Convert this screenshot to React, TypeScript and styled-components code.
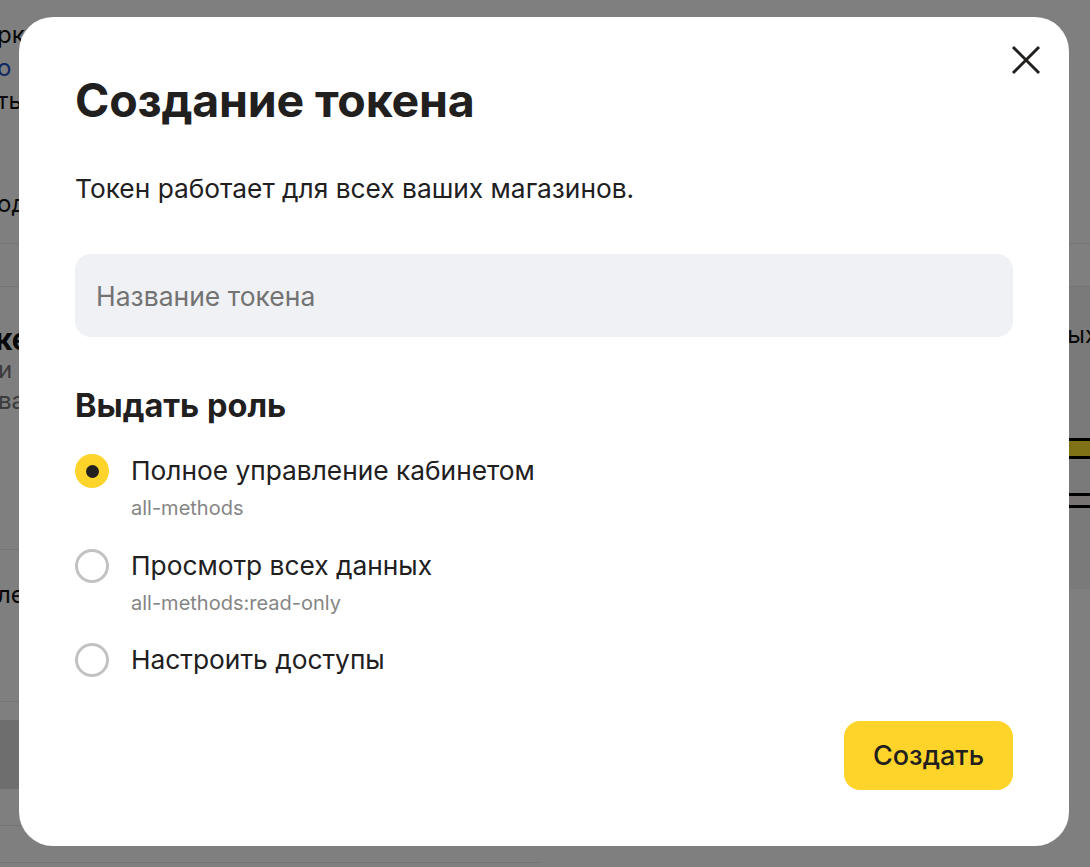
import React, { useState } from "react";
import styled, { createGlobalStyle } from "styled-components";

const GlobalStyle = createGlobalStyle`
  html, body {
    margin: 0;
    padding: 0;
    overflow: hidden;
  }
  body {
    font-family: Inter, "Noto Sans", "Liberation Sans", sans-serif;
    color: #21201f;
  }
  * {
    box-sizing: border-box;
  }
`;

const roles = [
  { id: "all", title: "Полное управление кабинетом", code: "all-methods" },
  { id: "read", title: "Просмотр всех данных", code: "all-methods:read-only" },
  { id: "custom", title: "Настроить доступы", code: "" },
];

const App = () => {
  const [role, setRole] = useState("all");

  return (
    <>
      <GlobalStyle />
      <Page>
        <Header>
          <PageLine>ркетплейс</PageLine>
          <PageLine $link>о</PageLine>
          <PageLine>ть</PageLine>
          <PageLine $gap>од</PageLine>
        </Header>
        <Tabs />
        <Content>
          <LeftCol>
            <PageHeading>кен</PageHeading>
            <PageMuted>и</PageMuted>
            <PageMuted>ва</PageMuted>
            <Divider $top={133} />
            <PageLine $top={28}>ле</PageLine>
            <Divider $top={90} />
            <GrayBand />
            <Divider $top={36} />
            <Divider $top={36} />
          </LeftCol>
          <RightCol>
            <InfoPanel>
              <PanelText>ых</PanelText>
              <YellowBar />
              <StripeBar />
            </InfoPanel>
          </RightCol>
        </Content>

        <Overlay>
          <Modal>
            <CloseButton aria-label="Закрыть">
              <svg width="30" height="30" viewBox="0 0 30 30">
                <path
                  d="M2 2L28 28M28 2L2 28"
                  stroke="#21201f"
                  strokeWidth="3"
                  fill="none"
                />
              </svg>
            </CloseButton>

            <Title>Создание токена</Title>
            <Lead>Токен работает для всех ваших магазинов.</Lead>
            <NameInput placeholder="Название токена" />

            <SectionTitle>Выдать роль</SectionTitle>
            <RoleList>
              {roles.map((r) => (
                <RoleOption key={r.id} onClick={() => setRole(r.id)}>
                  <Radio $checked={role === r.id} />
                  <RoleText>
                    <RoleTitle>{r.title}</RoleTitle>
                    {r.code && <RoleCode>{r.code}</RoleCode>}
                  </RoleText>
                </RoleOption>
              ))}
            </RoleList>

            <Footer>
              <PrimaryButton>Создать</PrimaryButton>
            </Footer>
          </Modal>
        </Overlay>
      </Page>
    </>
  );
};

export default App;

const Page = styled.div`
  position: relative;
  width: 100%;
  height: 867px;
  background: #ffffff;
  overflow: hidden;
  color: #111111;
`;

const Header = styled.div`
  padding: 18px 0 23px;
  border-bottom: 1px solid #e8e8e8;
`;

const PageLine = styled.div<{ $link?: boolean; $gap?: boolean; $top?: number }>`
  font-size: 24px;
  line-height: 33px;
  margin-left: -3px;
  margin-top: ${(p) => (p.$gap ? 70 : p.$top ?? 0)}px;
  color: ${(p) => (p.$link ? "#1f4fc4" : "#111111")};
`;

const Tabs = styled.div`
  height: 43px;
  border-bottom: 1px solid #e8e8e8;
`;

const Content = styled.div`
  display: flex;
`;

const LeftCol = styled.div`
  width: 540px;
  padding-top: 37px;
`;

const PageHeading = styled.div`
  font-size: 30px;
  font-weight: 700;
  line-height: 30px;
  margin-left: -5px;
`;

const PageMuted = styled.div`
  font-size: 24px;
  line-height: 31px;
  margin-left: -2px;
  color: #777777;
`;

const Divider = styled.div<{ $top: number }>`
  margin-top: ${(p) => p.$top}px;
  height: 1px;
  background: #e8e8e8;
`;

const GrayBand = styled.div`
  margin-top: 18px;
  height: 69px;
  background: #dcdcdc;
`;

const RightCol = styled.div`
  flex: 1;
`;

const InfoPanel = styled.div`
  height: 302px;
  background: #f4f4f4;
  padding-top: 33px;
  overflow: hidden;
`;

const PanelText = styled.div`
  font-size: 24px;
  line-height: 30px;
  text-align: right;
  margin-right: -8px;
`;

const YellowBar = styled.div`
  margin-top: 88px;
  height: 21px;
  background: #ffe52c;
  border-top: 3px solid #000;
  border-bottom: 3px solid #000;
`;

const StripeBar = styled.div`
  margin-top: 34px;
  height: 15px;
  background: #f0e6e6;
  border-top: 3px solid #000;
  border-bottom: 3px solid #000;
`;

const Overlay = styled.div`
  position: absolute;
  inset: 0;
  background: rgba(0, 0, 0, 0.5);
  padding: 17px 21px 0 19px;
  display: flex;
  align-items: flex-start;
`;

const Modal = styled.div`
  position: relative;
  width: 1050px;
  background: #ffffff;
  border-radius: 34px;
  padding: 57px 56px 56px;
  display: flex;
  flex-direction: column;
  color: #21201f;
`;

const CloseButton = styled.button`
  position: absolute;
  top: 28px;
  right: 28px;
  width: 30px;
  height: 30px;
  padding: 0;
  border: none;
  background: none;
  cursor: pointer;
  display: flex;
`;

const Title = styled.h1`
  margin: 0;
  font-size: 46.5px;
  line-height: 52px;
  font-weight: 700;
  letter-spacing: -0.2px;
`;

const Lead = styled.p`
  margin: 47px 0 0;
  font-size: 26.3px;
  line-height: 32px;
`;

const NameInput = styled.input`
  margin-top: 49px;
  height: 83px;
  width: 100%;
  border: none;
  outline: none;
  border-radius: 16px;
  background: #f0f1f4;
  padding: 0 21px;
  font-family: inherit;
  font-size: 26.5px;
  color: #21201f;

  &::placeholder {
    color: #737373;
  }
`;

const SectionTitle = styled.h2`
  margin: 51px 0 0;
  font-size: 32.5px;
  line-height: 36px;
  font-weight: 700;
`;

const RoleList = styled.div`
  margin-top: 31px;
  display: flex;
  flex-direction: column;
  gap: 29.5px;
`;

const RoleOption = styled.label`
  display: flex;
  align-items: flex-start;
  gap: 22px;
  cursor: pointer;
`;

const Radio = styled.span<{ $checked: boolean }>`
  flex: none;
  width: 34px;
  height: 34px;
  border-radius: 50%;
  margin-top: -1px;
  display: flex;
  align-items: center;
  justify-content: center;
  background: ${(p) => (p.$checked ? "#fed42b" : "#ffffff")};
  border: ${(p) => (p.$checked ? "none" : "3px solid #c2c2c2")};

  &::after {
    content: "";
    display: ${(p) => (p.$checked ? "block" : "none")};
    width: 13px;
    height: 13px;
    border-radius: 50%;
    background: #21201f;
  }
`;

const RoleText = styled.div`
  display: flex;
  flex-direction: column;
  gap: 9px;
`;

const RoleTitle = styled.span`
  font-size: 26.3px;
  line-height: 32px;
`;

const RoleCode = styled.span`
  font-size: 20px;
  line-height: 24px;
  color: #858585;
`;

const Footer = styled.div`
  margin-top: 44px;
  display: flex;
  justify-content: flex-end;
`;

const PrimaryButton = styled.button`
  height: 69px;
  padding: 0 29px;
  border: none;
  border-radius: 16px;
  background: #fed42b;
  font-family: inherit;
  font-size: 27px;
  font-weight: 500;
  color: #21201f;
  cursor: pointer;
`;
